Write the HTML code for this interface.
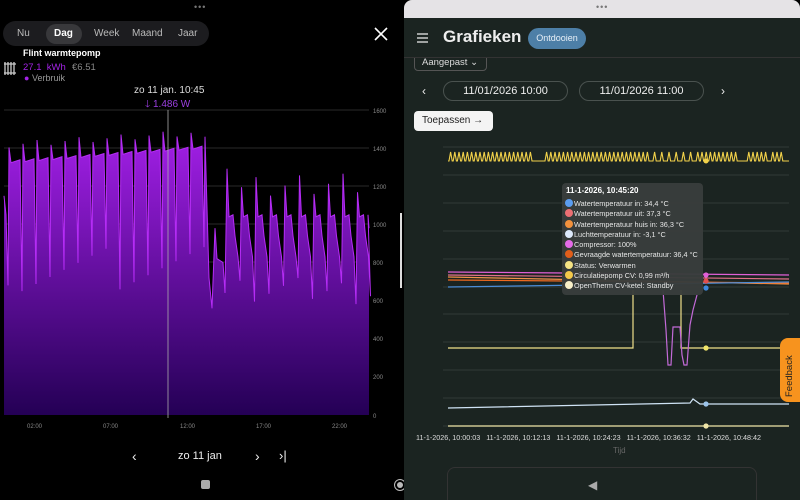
<!DOCTYPE html>
<html><head><meta charset="utf-8"><style>
*{margin:0;padding:0;box-sizing:border-box}
body{width:800px;height:500px;overflow:hidden;background:#000;font-family:"Liberation Sans",sans-serif;position:relative}
.a{position:absolute;white-space:nowrap}
#L{position:absolute;left:0;top:0;width:403px;height:500px;background:#000}
#R{position:absolute;left:404px;top:0;width:396px;height:500px;background:#1b2421;border-radius:8px 8px 0 0;overflow:hidden}
</style></head><body>
<div id="L">
 <div class="a" style="left:194px;top:2px;color:#777;font-size:9px;letter-spacing:1px">•••</div>
 <div class="a" style="left:3px;top:21px;width:206px;height:25px;background:#1c1c1f;border-radius:13px"></div>
 <div class="a" style="left:46px;top:24px;width:36px;height:20px;background:#38383b;border-radius:10px"></div>
 <div class="a" style="left:17px;top:28px;font-size:10px;color:#bbb">Nu</div>
 <div class="a" style="left:54px;top:28px;font-size:10px;color:#fff;font-weight:bold">Dag</div>
 <div class="a" style="left:94px;top:28px;font-size:10px;color:#bbb">Week</div>
 <div class="a" style="left:132px;top:28px;font-size:10px;color:#bbb">Maand</div>
 <div class="a" style="left:178px;top:28px;font-size:10px;color:#bbb">Jaar</div>
 <svg class="a" style="left:373px;top:26px" width="16" height="16"><path d="M2 2L14 14M14 2L2 14" stroke="#fff" stroke-width="1.6"/></svg>
 <svg class="a" style="left:3px;top:61px" width="14" height="15"><g stroke="#ccc" stroke-width="1.3" fill="none"><path d="M2 1v13M5 1v13M8 1v13M11 1v13M1 3h12M1 12h12"/></g></svg>
 <div class="a" style="left:23px;top:48px;font-size:9px;color:#fff;font-weight:bold">Flint warmtepomp</div>
 <div class="a" style="left:23px;top:62px;font-size:9.5px;color:#a323e6">27.1&nbsp; kWh</div>
 <div class="a" style="left:72px;top:62px;font-size:9.5px;color:#888">€6.51</div>
 <div class="a" style="left:24px;top:73px;font-size:9px;color:#999"><span style="color:#a323e6">●</span> Verbruik</div>
 <div class="a" style="left:134px;top:85px;font-size:10px;color:#ddd">zo 11 jan. 10:45</div>
 <div class="a" style="left:145px;top:97px;font-size:10px;color:#9b3fe0">🡓 1.486 W</div>
 <svg class="a" style="left:0;top:100px" width="403" height="340" id="lc"></svg>
 <div class="a" style="left:400px;top:213px;width:2px;height:75px;background:#ddd"></div>
 <div class="a" style="left:132px;top:448px;font-size:14px;color:#eee">‹</div>
 <div class="a" style="left:178px;top:450px;font-size:11px;color:#eee">zo 11 jan</div>
 <div class="a" style="left:255px;top:448px;font-size:14px;color:#eee">›</div>
 <div class="a" style="left:279px;top:448px;font-size:13px;color:#eee">›|</div>
 <div class="a" style="left:201px;top:480px;width:9px;height:9px;background:#aaa;border-radius:2px"></div>
</div>
<div class="a" style="left:394px;top:479px;width:12px;height:12px;border:1.5px solid #bbb;border-radius:50%"></div>
<div class="a" style="left:397px;top:482px;width:6px;height:6px;background:#bbb;border-radius:50%"></div>
<div id="R">
 <div class="a" style="left:0;top:0;width:396px;height:18px;background:#e5e3e6"></div>
 <div class="a" style="left:192px;top:2px;color:#777;font-size:9px;letter-spacing:1px">•••</div>
 <div class="a" style="left:10px;top:50px;width:73px;height:21px;border:1px solid #555;border-radius:4px"></div>
 <div class="a" style="left:18px;top:57px;font-size:9.5px;color:#ddd">Aangepast ⌄</div>
 <div class="a" style="left:0;top:18px;width:396px;height:40px;background:#1b2421;border-bottom:1px solid #333"></div>
 <svg class="a" style="left:13px;top:33px" width="12" height="10"><path d="M0 1h11M0 5h11M0 9h11" stroke="#eee" stroke-width="1.2"/></svg>
 <div class="a" style="left:39px;top:27px;font-size:17px;font-weight:bold;color:#eee">Grafieken</div>
 <div class="a" style="left:124px;top:28px;width:58px;height:21px;background:#4d7fa7;border-radius:11px;color:#e8f0f8;font-size:9px;text-align:center;line-height:21px">Ontdooien</div>
 <div class="a" style="left:18px;top:84px;font-size:12px;color:#eee">‹</div>
 <div class="a" style="left:39px;top:81px;width:125px;height:20px;border:1px solid #4a524f;border-radius:10px;color:#eee;font-size:11px;text-align:center;line-height:18px">11/01/2026 10:00</div>
 <div class="a" style="left:175px;top:81px;width:125px;height:20px;border:1px solid #4a524f;border-radius:10px;color:#eee;font-size:11px;text-align:center;line-height:18px">11/01/2026 11:00</div>
 <div class="a" style="left:317px;top:84px;font-size:12px;color:#eee">›</div>
 <div class="a" style="left:10px;top:111px;width:79px;height:20px;background:#f4f4f4;border-radius:4px;color:#222;font-size:10px;line-height:20px;padding-left:8px">Toepassen →</div>
 <svg class="a" style="left:0;top:0" width="396" height="500" id="rc"></svg>
 <div class="a" style="left:12px;top:433px;font-size:7.2px;color:#ddd">11-1-2026, 10:00:03&nbsp;&nbsp; 11-1-2026, 10:12:13&nbsp;&nbsp; 11-1-2026, 10:24:23&nbsp;&nbsp; 11-1-2026, 10:36:32&nbsp;&nbsp; 11-1-2026, 10:48:42</div>
 <div class="a" style="left:209px;top:446px;font-size:8px;color:#666">Tijd</div>
 <div class="a" style="left:43px;top:467px;width:310px;height:40px;border:1px solid #333;border-radius:8px"></div>
 <div class="a" style="left:184px;top:478px;font-size:12px;color:#aaa">◀</div>
 <div class="a" style="left:158px;top:183px;width:141px;height:112px;background:#393d3c;border-radius:4px;opacity:.97"></div>
 <div class="a" style="left:162px;top:186px;font-size:8px;color:#fff;font-weight:bold">11-1-2026, 10:45:20</div>
 <div class="a" style="left:161px;top:199px;font-size:7.3px;color:#e6e6e6;line-height:10.3px" id="tt"></div>
 <div class="a" style="left:376px;top:338px;width:24px;height:64px;background:#f7931e;border-radius:8px 0 0 8px"></div>
 <div class="a" style="left:380px;top:397px;font-size:9.5px;color:#222;transform:rotate(-90deg);transform-origin:0 0">Feedback</div>
</div>
<script>
var ns="http://www.w3.org/2000/svg";
function el(p,t,a){var e=document.createElementNS(ns,t);for(var k in a)e.setAttribute(k,a[k]);p.appendChild(e);return e}
var lc=document.getElementById('lc');
var d=el(lc,'defs',{});var g=el(d,'linearGradient',{id:'g',x1:0,y1:0,x2:0,y2:1});
el(g,'stop',{offset:0,'stop-color':'#a31fe8'});el(g,'stop',{offset:1,'stop-color':'#240055'});
for(var i=0;i<8;i++){var y=10+i*38;el(lc,'line',{x1:4,x2:369,y1:y,y2:y,stroke:'#2a2a2a','stroke-width':1});
el(lc,'text',{x:373,y:y+3,fill:'#888','font-size':6,'font-family':'Liberation Sans'}).textContent=1600-i*200;}
el(lc,'text',{x:373,y:318,fill:'#888','font-size':6,'font-family':'Liberation Sans'}).textContent='0';
function Y(v){return 315-v*305/1600}
var pts=[[4,Y(1150)],[6,Y(1050)],[8,Y(680)]];var x=9;var c=0;
while(x<198){var pk=1400+(x/204)*70+(c%3)*15, fl=1320+(x/204)*80; pts.push([x,Y(pk)]);pts.push([x+2,Y(fl)]);pts.push([x+11,Y(fl+15)]);pts.push([x+13,Y(650+(c*37)%250)]);x+=14;c++;}
pts.push([x,Y(1460)]);pts.push([x+4,Y(720)]);pts.push([x+7,Y(560)]);x+=10;pts.push([x,Y(980)]);pts.push([x+2,Y(820)]);pts.push([x+8,Y(800)]);pts.push([x+10,Y(640)]);x+=12;
while(x<366){var pk=1150+((c*53)%150);pts.push([x,Y(pk)]);pts.push([x+2,Y(1040)]);pts.push([x+6,Y(1050)]);pts.push([x+8,Y(940)]);pts.push([x+11,Y(830)]);pts.push([x+13,Y(580+(c*41)%150)]);x+=14.5;c++;}
pts.push([368,Y(1050)]);pts.push([369,Y(980)]);
var s='M4,315 '+pts.map(p=>'L'+p[0].toFixed(1)+','+p[1].toFixed(1)).join(' ')+' L369,315Z';
el(lc,'path',{d:s,fill:'url(#g)'});
el(lc,'path',{d:'M'+pts.map(p=>p[0].toFixed(1)+','+p[1].toFixed(1)).join(' L'),fill:'none',stroke:'#b52cf5','stroke-width':1});
el(lc,'line',{x1:168,x2:168,y1:10,y2:318,stroke:'#aaa','stroke-width':0.8});
[['02:00',27],['07:00',103],['12:00',180],['17:00',256],['22:00',332]].forEach(a=>el(lc,'text',{x:a[1],y:328,fill:'#888','font-size':6,'font-family':'Liberation Sans'}).textContent=a[0]);
var rc=document.getElementById('rc');var ox=-404;
[147,175,203,231,259,287,314,342,370,398,426].forEach(y=>el(rc,'line',{x1:443+ox,x2:789+ox,y1:y,y2:y,stroke:'#3a4240','stroke-width':0.8}));
var sq='M'+(448+ox)+',161';var xx=449;var k=0;
while(xx<788){var on=!((xx>532&&xx<545)||(xx>645&&xx<700&&k%2)||(xx>738&&xx<745)||(xx>766&&xx<770));
if(on&&xx<780){sq+=' L'+(xx+ox)+',161 L'+(xx+1.6+ox)+',152 L'+(xx+3.2+ox)+',161';xx+=4.2}else{sq+=' L'+(xx+ox)+',161';xx+=3}k++}
el(rc,'path',{d:sq+' L'+(789+ox)+',161',fill:'none',stroke:'#f1d14a','stroke-width':1.1});
el(rc,'circle',{cx:706+ox,cy:161,r:2.5,fill:'#f1d14a'});
function ln(d,c,w){el(rc,'path',{d:d,fill:'none',stroke:c,'stroke-width':w||1.2,transform:'translate('+ox+',0)'})}
ln('M448,275 L789,279','#e1708a');ln('M448,277 L789,284','#f0934a');ln('M448,280 L789,283','#f06a20');ln('M448,287 L789,282','#4a8cd8');ln('M448,272 L789,275','#e05fd6');
ln('M448,348 L633,348 L633,290 M681,290 L681,348 L780,348','#f0e08a');
ln('M663,290 L666,330 L668,365 L671,365 L673,327 L680,327 L682,355 L684,365 L687,365 L690,325 L693,310 L697,295','#c36ad8');
ln('M448,408 L690,403 L693,399 L700,404 L789,404','#cfe3f5');ln('M448,426 L789,426','#efe5a8');
[[706,348,'#f1e56a'],[706,404,'#9cc4ea'],[706,275,'#e05fd6'],[706,281,'#e24f4f'],[706,288,'#3e88dd'],[706,426,'#efe5a8']].forEach(a=>el(rc,'circle',{cx:a[0]+ox,cy:a[1],r:2.6,fill:a[2]}));
var rows=[['#5b9df0','Watertemperatuur in: 34,4 °C'],['#ec6f73','Watertemperatuur uit: 37,3 °C'],['#f2913d','Watertemperatuur huis in: 36,3 °C'],['#dde9fb','Luchttemperatuur in: -3,1 °C'],['#e46be8','Compressor: 100%'],['#e15e1a','Gevraagde watertemperatuur: 36,4 °C'],['#f5e384','Status: Verwarmen'],['#f3c94a','Circulatiepomp CV: 0,99 m³/h'],['#f8efc8','OpenTherm CV-ketel: Standby']];
document.getElementById('tt').innerHTML=rows.map(r=>'<div><span style="display:inline-block;width:8px;height:8px;border-radius:50%;background:'+r[0]+';vertical-align:-1px;margin-right:1px"></span>'+r[1]+'</div>').join('');
</script>
</body></html>
